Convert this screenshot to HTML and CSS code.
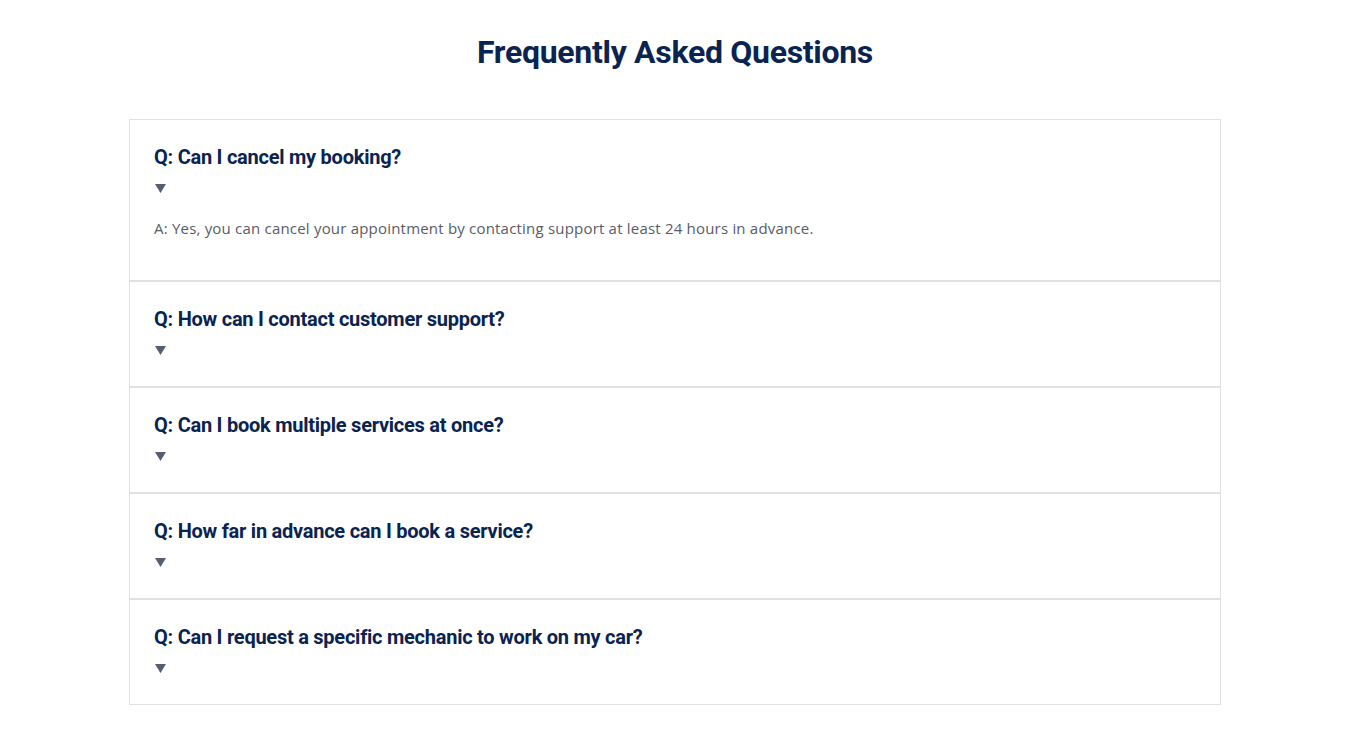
FILE: index.html
```html
<!DOCTYPE html>
<html lang="en">
<head>
<meta charset="utf-8">
<title>FAQ</title>
<link rel="stylesheet" href="styles.css">
</head>
<body>
<main class="page">
  <h1 class="title">Frequently Asked Questions</h1>
  <section class="faq">
    <div class="item">
      <h3 class="question">Q: Can I cancel my booking?</h3>
      <div class="toggle"><svg class="arrow" viewBox="0 0 11 9" width="11" height="9"><path d="M0 0H11L5.5 9Z"/></svg></div>
      <p class="answer">A: Yes, you can cancel your appointment by contacting support at least 24 hours in advance.</p>
    </div>
    <div class="item">
      <h3 class="question">Q: How can I contact customer support?</h3>
      <div class="toggle"><svg class="arrow" viewBox="0 0 11 9" width="11" height="9"><path d="M0 0H11L5.5 9Z"/></svg></div>
    </div>
    <div class="item">
      <h3 class="question">Q: Can I book multiple services at once?</h3>
      <div class="toggle"><svg class="arrow" viewBox="0 0 11 9" width="11" height="9"><path d="M0 0H11L5.5 9Z"/></svg></div>
    </div>
    <div class="item">
      <h3 class="question">Q: How far in advance can I book a service?</h3>
      <div class="toggle"><svg class="arrow" viewBox="0 0 11 9" width="11" height="9"><path d="M0 0H11L5.5 9Z"/></svg></div>
    </div>
    <div class="item">
      <h3 class="question">Q: Can I request a specific mechanic to work on my car?</h3>
      <div class="toggle"><svg class="arrow" viewBox="0 0 11 9" width="11" height="9"><path d="M0 0H11L5.5 9Z"/></svg></div>
    </div>
  </section>
</main>
</body>
</html>
```
FILE: styles.css
```css
* { box-sizing: border-box; }
html, body { margin: 0; padding: 0; background: #fff; }
body { padding-left: 4px; }
.page {
  width: 1092px;
  margin: 0 auto;
  padding-top: 32px;
}
.title {
  margin: 0 0 47px;
  text-align: center;
  font-family: Roboto, "Liberation Sans", sans-serif;
  font-weight: 700;
  font-size: 32px;
  line-height: 40px;
  letter-spacing: -0.3px;
  color: #0a2350;
}
.faq {
  border: 1px solid #e1e1e1;
}
.item {
  padding: 25px 24px 24px;
}
.item + .item {
  border-top: 2px solid #e1e1e1;
}
.question {
  margin: 0;
  font-family: Roboto, "Liberation Sans", sans-serif;
  font-weight: 700;
  font-size: 20px;
  line-height: 24px;
  letter-spacing: -0.25px;
  color: #0a2350;
}
.toggle {
  margin-top: 7px;
  height: 24px;
  display: flex;
  align-items: center;
  padding-left: 1px;
}
.arrow { fill: #565f72; display: block; }
.answer {
  margin: 0;
  padding: 16px 0;
  font-family: "Open Sans", "DejaVu Sans", sans-serif;
  font-size: 15px;
  line-height: 24px;
  letter-spacing: 0.2px;
  color: #575c66;
}
```
